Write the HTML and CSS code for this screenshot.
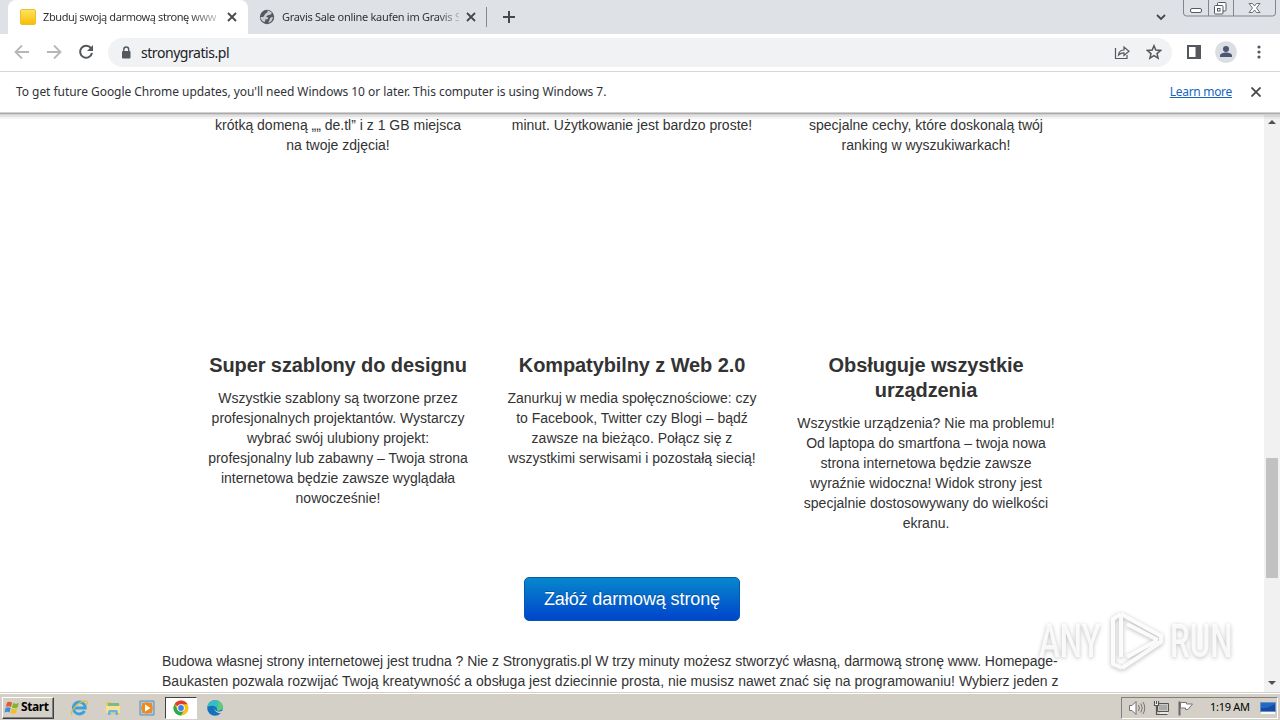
FILE: index.html
```
<!DOCTYPE html>
<html lang="pl">
<head>
  <meta charset="UTF-8" />
  <title>Zbuduj swoją darmową stronę www</title>
  <link rel="stylesheet" href="styles.css">
</head>
<body>
  <div id="screen">
    <div id="tabstrip">
      <div class="tab active">
        <span class="favicon-yellow"></span>
        <span class="tab-title">Zbuduj swoją darmową stronę www</span>
        <svg class="close" width="10" height="10" viewBox="0 0 10 10"><path d="M1 1l8 8M9 1l-8 8" /></svg>
      </div>
      <div class="tab">
        <svg class="globe" width="16" height="16" viewBox="0 0 16 16"><circle cx="8" cy="8" r="7.2" fill="#54585d" /><path d="M8.500 1.500q.5 2-1 2.500T5.500 6 4 8H1.500q0 3 3.500 5 2-.5 1-2.500 3 0 3-1.500T7 8q1-2 3-2t3-2q-2-2.500-4.500-2.500zM14 8q-2.500-.5-3 1.500t-2 4q4 0 5-5.500z" fill="#dee1e6" opacity=".85" /></svg>
        <span class="tab-title second">Gravis Sale online kaufen im Gravis S</span>
        <svg class="close" width="10" height="10" viewBox="0 0 10 10"><path d="M1 1l8 8M9 1l-8 8" /></svg>
      </div>
      <span class="separator"></span>
      <svg class="new-tab" width="12" height="12" viewBox="0 0 12 12"><path d="M6 0v12M0 6h12" /></svg>
      <svg class="tab-search" width="10" height="7" viewBox="0 0 10 7"><path d="M1 1l4 4 4-4" /></svg>
      <svg class="window-buttons" width="94" height="18" viewBox="0 0 94 18">
        <path d="M.5 0v13q0 3 3 3h86q3 0 3-3V0M25.500 0v16M50.500 0v16" fill="none" stroke="#81858d" />
        <rect x="7.500" y="8.500" width="11" height="4" rx="1.500" fill="#fff" stroke="#555a63" />
        <rect x="34.500" y="2.500" width="8.500" height="8.500" rx="1" fill="#fff" stroke="#555a63" />
        <rect x="31.500" y="5.500" width="8.500" height="8.500" rx="1" fill="#fff" stroke="#555a63" />
        <rect x="34.500" y="8.500" width="2.500" height="2.500" fill="none" stroke="#555a63" />
        <path d="M66 3.500h3.500l2 2.500 2-2.500H77l-3.500 4.500 3.500 4.500h-3.500l-2-2.500-2 2.500H66l3.500-4.500z" fill="#fff" stroke="#6b6f77" />
      </svg>
    </div>

    <div id="toolbar">
      <svg class="nav" width="16" height="16" viewBox="0 0 16 16"><path d="M15 8H2M8 1.500L1.500 8 8 14.500" stroke="#b5b7ba" /></svg>
      <svg class="nav" width="16" height="16" viewBox="0 0 16 16"><path d="M1 8h13M8 1.500L14.500 8 8 14.500" stroke="#b5b7ba" /></svg>
      <svg class="nav reload" width="16" height="16" viewBox="0 0 16 16"><path d="M13 4.200A6 6 0 1 0 14 9" stroke="#54585d" stroke-width="2" /><path d="M15 1v6H9z" fill="#54585d" stroke="none" /></svg>
      <div id="omnibox">
        <svg width="10" height="13" viewBox="0 0 10 13"><rect x="1" y="5" width="8.500" height="7.500" rx="1" fill="#54585d" /><path d="M2.800 5.500V3.500a2.450 2.450 0 0 1 4.900 0v2" fill="none" stroke="#54585d" stroke-width="1.400" /></svg>
        <span class="url">stronygratis.pl</span>
        <svg class="share" width="16" height="16" viewBox="0 0 16 16"><path d="M1.500 4v10.500H13V11M4.500 11C5 7.500 7 6 10 6V3l5 4.300L10 11.500V8.800C7.500 8.800 6 9.500 4.500 11z" fill="none" stroke="#54585d" stroke-width="1.200" /></svg>
        <svg class="star" width="16" height="16" viewBox="0 0 16 16"><path d="M8 1.800l1.800 4.300 4.700.4L11 9.600l1.100 4.600L8 11.700l-4.100 2.500L5 9.600 1.500 6.500l4.700-.4z" fill="none" stroke="#54585d" stroke-width="1.500" /></svg>
      </div>
      <svg class="panel" width="14" height="14" viewBox="0 0 14 14"><path d="M1 1h12v12H1z" fill="none" stroke="#54585d" stroke-width="2" /><path d="M8.500 1H13v12H8.500z" fill="#54585d" /></svg>
      <svg class="profile" width="22" height="22" viewBox="0 0 22 22"><circle cx="11" cy="11" r="10.800" fill="#dadde2" /><circle cx="11" cy="8" r="3" fill="#4b5672" /><path d="M5 16v-1.500c0-2 3.500-3 6-3s6 1 6 3V16z" fill="#4b5672" /></svg>
      <svg class="menu" width="4" height="14" viewBox="0 0 4 14"><g fill="#54585d"><circle cx="2" cy="2" r="1.600" /><circle cx="2" cy="7" r="1.600" /><circle cx="2" cy="12" r="1.600" /></g></svg>
    </div>

    <div id="infobar">
      <span class="message">To get future Google Chrome updates, you'll need Windows 10 or later. This computer is using Windows 7.</span>
      <a class="learn-more">Learn more</a>
      <svg class="close" width="10" height="10" viewBox="0 0 10 10"><path d="M.5.5l9 9M9.500.5l-9 9" /></svg>
    </div>

    <div id="viewport">
      <div id="page">
        <div class="features top">
          <div class="feature"><p>krótką domeną „„ de.tl” i z 1 GB miejsca<br>na twoje zdjęcia!</p></div>
          <div class="feature"><p>minut. Użytkowanie jest bardzo proste!</p></div>
          <div class="feature"><p>specjalne cechy, które doskonalą twój<br>ranking w wyszukiwarkach!</p></div>
        </div>
        <div class="features bottom">
          <div class="feature">
            <h3>Super szablony do designu</h3>
            <p>Wszystkie szablony są tworzone przez<br>profesjonalnych projektantów. Wystarczy<br>wybrać swój ulubiony projekt:<br>profesjonalny lub zabawny – Twoja strona<br>internetowa będzie zawsze wyglądała<br>nowocześnie!</p>
          </div>
          <div class="feature">
            <h3>Kompatybilny z Web 2.0</h3>
            <p>Zanurkuj w media społęcznościowe: czy<br>to Facebook, Twitter czy Blogi – bądź<br>zawsze na bieżąco. Połącz się z<br>wszystkimi serwisami i pozostałą siecią!</p>
          </div>
          <div class="feature">
            <h3>Obsługuje wszystkie<br>urządzenia</h3>
            <p>Wszystkie urządzenia? Nie ma problemu!<br>Od laptopa do smartfona – twoja nowa<br>strona internetowa będzie zawsze<br>wyraźnie widoczna! Widok strony jest<br>specjalnie dostosowywany do wielkości<br>ekranu.</p>
          </div>
        </div>
        <a class="btn">Załóż darmową stronę</a>
        <p class="intro"><span class="tight">Budowa własnej strony internetowej jest trudna ? Nie z Stronygratis.pl W trzy minuty możesz stworzyć własną, darmową stronę www. Homepage-</span><br>Baukasten pozwala rozwijać Twoją kreatywność a obsługa jest dziecinnie prosta, nie musisz nawet znać się na programowaniu! Wybierz jeden z</p>
      </div>
      <div id="scrollbar">
        <svg width="8" height="4" viewBox="0 0 8 4"><path d="M0 4l4-4 4 4z" fill="#505050" /></svg>
        <span class="thumb"></span>
        <svg width="8" height="4" viewBox="0 0 8 4"><path d="M0 0l4 4 4-4z" fill="#505050" /></svg>
      </div>
    </div>

    <div id="taskbar">
      <div class="start">
        <svg width="16" height="16" viewBox="0 0 16 16"><path d="M3 2.500q2-1.500 5 0L7 7Q4.500 5.500 1.800 7z" fill="#e8582a" /><path d="M9 3q3 1.500 6 0l-1.500 4.500q-3 1.300-5.500 0z" fill="#7db72f" /><path d="M1.500 8q2.500-1.500 5.200 0l-1.200 4.500q-2.500-1.500-5 0z" fill="#3f8edb" /><path d="M7.700 8.500q2.500 1.300 5.500 0L12 13q-3 1.500-5.500 0z" fill="#f6bd22" /></svg>
        <span>Start</span>
      </div>
      <div class="quick">
        <svg width="18" height="18" viewBox="0 0 18 18"><path d="M14.500 12a6 6 0 1 1 .8-3H5" fill="none" stroke="#39a2de" stroke-width="2.800" /><path d="M2 16C-1 12 11 1 16 2c2 .6 1 3 0 4" fill="none" stroke="#e9b93c" stroke-width="1.300" /></svg>
      </div>
      <div class="quick">
        <svg width="18" height="18" viewBox="0 0 18 18"><path d="M2 3h5l1 2h8v10H2z" fill="#e9c766" /><path d="M4 4h11v5H4z" fill="#7dbb82" /><path d="M2 7h14v7H2z" fill="#f6e19a" /><path d="M4 16v-3q0-2 2-2h6q2 0 2 2v3h-2.500v-2.500h-5V16z" fill="#67b5df" /></svg>
      </div>
      <div class="quick">
        <svg width="18" height="18" viewBox="0 0 18 18"><path d="M2 2h14v14H2z" fill="#a9cbe4" stroke="#5b8fb8" /><path d="M4 4h9v10H4z" fill="#d8e7f0" /><path d="M4 4h10v10H4z" fill="#f08a1c" /><circle cx="9" cy="9" r="5.800" fill="#f08a1c" /><path d="M7 5.500L12.500 9 7 12.500z" fill="#fff" /></svg>
      </div>
      <div class="quick pressed">
        <svg width="16" height="16" viewBox="0 0 16 16"><circle cx="8" cy="8" r="7.500" fill="#fbc116" /><path d="M8 8L1.500 4.250A7.500 7.500 0 0 1 14.500 4.250H8z" fill="#e33b2e" /><path d="M1.500 4.250A7.500 7.500 0 0 0 8 15.500L11.200 10 4.800 10z" fill="#2da94f" /><circle cx="8" cy="8" r="3.800" fill="#fff" /><circle cx="8" cy="8" r="2.900" fill="#3f7fe8" /></svg>
      </div>
      <div class="quick">
        <svg width="18" height="18" viewBox="0 0 18 18"><circle cx="9" cy="9" r="7.800" fill="#1472bd" /><path d="M1.300 8C2 3.500 5.500 1.200 9 1.200c5 0 8 3.500 7.800 7.300-.2 2.500-3 3.700-5.800 2.700 1-4-5-6-9.700-3.200z" fill="#37bfc0" /><path d="M12 1.800c3 1.200 5 4 4.700 7-.4 2-3 3.200-5.700 2.400 1.500-3 2-6 1-9.400z" fill="#5fce72" /><path d="M8.500 8c-.5 3.500 2.500 5 6.500 4.300l1.500-.5 1.500 1-3 1.500C11.500 14.500 7.500 12 8.500 8z" fill="#d4d0c8" /></svg>
      </div>
      <div class="tray">
        <svg width="18" height="16" viewBox="0 0 18 16"><path d="M1.500 5.500H4L8 1.500v13L4 10.500H1.500z" fill="#fff" stroke="#6e6e6e" /><path d="M10.500 5q1.800 3 0 6M12.800 3.500q3 4.500 0 9M15 2q3.500 6 0 12" fill="none" stroke="#777" /></svg>
        <svg width="18" height="16" viewBox="0 0 18 16"><path d="M4.500 3.500h11v8h-11z" fill="#c8c8c8" stroke="#555" /><path d="M6 5h8v5H6z" fill="#aaa" /><path d="M1 1h5v5H1z" fill="#fff" /><path d="M1.500 1v4.500h4V1M3.500 1v3M3.500 5.500v9h11" fill="none" stroke="#555" stroke-width="1.200" /><path d="M7 13h8" stroke="#fff" /></svg>
        <svg width="17" height="16" viewBox="0 0 17 16"><path d="M1.500 1.500v14" stroke="#666" stroke-width="2" /><path d="M2.500 2.500h6V4h6l-2.500 3-2 2.500H7.500V8h-5z" fill="#fff" stroke="#777" /></svg>
        <span class="clock">1:19 AM</span>
        <svg class="desktop" width="16" height="14" viewBox="0 0 16 14"><path d="M.5 1.500h15v9H.5z" fill="#2468c5" stroke="#6890c2" /><path d="M1 7Q8 8 15 3v7H1z" fill="#164b9f" /><path d="M1 12h14" stroke="#f8f8f8" stroke-width="2" /></svg>
      </div>
    </div>

    <div id="watermark">
      <span>ANY</span>
      <svg width="60" height="64" viewBox="0 0 60 64"><path d="M15 5v43M15 5L55 27v6L16 59M15 5L7 10v45l9 4M21 48l31-17M21 15l31 16" /></svg>
      <span>RUN</span>
    </div>
  </div>
</body>
</html>
```
FILE: styles.css
```
:root {
  --strip: #dee1e6;
  --icon: #45484d;
  --text: #333;
  --taskbar: #d4d0c8;
}

* {
  margin: 0;
  padding: 0;
  box-sizing: border-box;
}

body {
  background: #fff;
  overflow: hidden;
}

svg {
  display: block;
  flex: none;
}

#screen {
  position: relative;
  width: 1280px;
  height: 720px;
  display: flex;
  flex-direction: column;
  font-family: "Noto Sans", sans-serif;
  color: #303338;
}

#tabstrip {
  height: 34px;
  flex: none;
  display: flex;
  align-items: center;
  padding-left: 8px;
  background: var(--strip);
}

.tab {
  width: 239px;
  height: 34px;
  display: flex;
  align-items: center;
  padding: 0 0 0 11px;
}

.tab.active {
  width: 240px;
  padding-left: 12px;
  background: #fff;
  border-radius: 8px 8px 0 0;
}

.favicon-yellow {
  width: 16px;
  height: 16px;
  border: 1px solid #edbd32;
  border-radius: 2px;
  background: linear-gradient(#ffe35c, #fabd08);
}

.tab-title {
  width: 175px;
  margin-left: 7px;
  margin-right: 9px;
  padding-bottom: 1px;
  overflow: hidden;
  white-space: nowrap;
  font-size: 11px;
  letter-spacing: -0.4px;
  -webkit-mask-image: linear-gradient(to right, #000 145px, transparent 185px);
}

.tab-title.second {
  width: 177px;
  margin-right: 7px;
  letter-spacing: -0.3px;
  -webkit-mask-image: linear-gradient(to right, #000 155px, transparent 183px);
}

.close {
  fill: none;
  stroke: var(--icon);
  stroke-width: 1.8;
}

.separator {
  width: 1px;
  height: 20px;
  margin-left: -1px;
  background: #85888d;
}

.new-tab {
  margin-left: 16px;
  stroke: var(--icon);
  stroke-width: 2;
}

.tab-search {
  margin-left: auto;
  fill: none;
  stroke: var(--icon);
  stroke-width: 1.8;
}

.window-buttons {
  align-self: flex-start;
  margin: 0 3px 0 17px;
}

#toolbar {
  height: 38px;
  flex: none;
  display: flex;
  align-items: center;
  padding-left: 14px;
  padding-bottom: 1px;
  border-bottom: 1px solid #d5d7da;
}

.nav {
  margin-right: 16px;
  fill: none;
  stroke-width: 1.8;
}

.nav.reload {
  margin-right: 14px;
}

#omnibox {
  width: 1064px;
  height: 29px;
  display: flex;
  align-items: center;
  padding: 0 10px 0 13px;
  border-radius: 15px;
  background: #f0f2f4;
}

.url {
  margin-left: 10px;
  font-size: 14px;
  letter-spacing: -0.45px;
  color: #202124;
}

.share {
  margin-left: auto;
  margin-right: 16px;
}

.panel {
  margin-left: 15px;
}

.profile {
  margin-left: 14px;
}

.menu {
  margin-left: 20px;
}

#infobar {
  height: 43px;
  flex: none;
  display: flex;
  align-items: center;
  padding: 0 19px 3px 16px;
  background: linear-gradient(#fff 40px, #d0d0d0 40px 41px, #ababab 41px 42px, #cfcfcf 42px);
  font-size: 12px;
}

#infobar .close {
  margin-left: 19px;
}

.message {
  padding-bottom: 1px;
  white-space: nowrap;
  letter-spacing: -0.05px;
}

.learn-more {
  margin-left: auto;
  padding-bottom: 1px;
  letter-spacing: -0.3px;
  color: #1765c1;
  text-decoration: underline;
}

#viewport {
  height: 577px;
  flex: none;
  display: flex;
  overflow: hidden;
  background: linear-gradient(#e2e2e2 2px, #f5f5f5 2px 4px, #fff 4px);
}

#page {
  width: 1264px;
  display: flex;
  flex-direction: column;
  align-items: center;
  font-family: "Liberation Sans", Arial, sans-serif;
  font-size: 14px;
  line-height: 20px;
  color: var(--text);
}

.features {
  display: flex;
  gap: 20px;
  flex: none;
  text-align: center;
  white-space: nowrap;
}

.features.top {
  height: 238px;
}

.features.bottom {
  height: 224px;
}

.feature {
  width: 274px;
}

.feature h3 {
  margin-bottom: 10px;
  font-size: 20px;
  line-height: 25px;
  letter-spacing: -0.1px;
}

.btn {
  width: 216px;
  height: 44px;
  flex: none;
  border: 1px solid #0759b0;
  border-radius: 5px;
  background: linear-gradient(#0788cc, #0044cc);
  color: #fff;
  font-size: 18px;
  line-height: 42px;
  letter-spacing: -0.1px;
  text-align: center;
  text-shadow: 0 -1px 0 rgba(0, 0, 0, 0.25);
}

.intro {
  width: 940px;
  flex: none;
  margin-top: 30px;
  white-space: nowrap;
  letter-spacing: 0.015px;
}

.intro .tight {
  letter-spacing: -0.045px;
}

#scrollbar {
  width: 16px;
  display: flex;
  flex-direction: column;
  align-items: center;
  padding: 5px 0 7px;
  background: linear-gradient(#d5d5d5 2px, #e8e8e8 2px 4px, #f1f1f1 4px);
}

.thumb {
  width: 12px;
  height: 120px;
  margin-top: 334px;
  margin-bottom: auto;
  background: #c1c1c1;
}

#taskbar {
  height: 28px;
  flex: none;
  display: flex;
  align-items: center;
  padding: 2px 2px 0;
  border-top: 1px solid #d4d0c8;
  background: var(--taskbar);
  box-shadow: inset 0 1px #fff;
}

.start {
  width: 52px;
  height: 22px;
  display: flex;
  align-items: center;
  gap: 1px;
  padding-left: 1px;
  border: 1px solid;
  border-color: #fff #404040 #404040 #fff;
  box-shadow: inset -1px -1px #808080;
  font-size: 12px;
  font-weight: bold;
  letter-spacing: -0.4px;
  color: #000;
}

.start span {
  padding-bottom: 2px;
}

.quick {
  width: 32px;
  height: 22px;
  margin-right: 2px;
  display: flex;
  align-items: center;
  justify-content: center;
}

.start + .quick {
  margin-left: 9px;
}

.quick.pressed {
  border: 1px solid;
  border-color: #404040 #fff #fff #404040;
  background: #fff;
}

.tray {
  width: 157px;
  height: 22px;
  margin-left: auto;
  display: flex;
  align-items: center;
  gap: 7px;
  padding-left: 6px;
  border: 1px solid;
  border-color: #808080 #fff #fff #808080;
}

.clock {
  margin-left: 8px;
  padding-bottom: 2px;
  white-space: nowrap;
  font-size: 11px;
  letter-spacing: -0.3px;
  color: #000;
}

.desktop {
  margin-left: 3px;
}

/* translucent logo lying over the page */
#watermark {
  position: absolute;
  left: 1039px;
  top: 608px;
  display: flex;
  align-items: center;
  gap: 4px;
  font-family: Roboto, sans-serif;
  font-size: 46px;
  font-weight: 500;
  color: rgba(255, 255, 255, 0.85);
  filter: drop-shadow(0 1px 2px rgba(0, 0, 0, 0.3));
}

#watermark span {
  width: 63px;
  line-height: 66px;
  white-space: nowrap;
  transform: scaleX(0.68);
  transform-origin: left;
}

#watermark path {
  fill: none;
  stroke: rgba(255, 255, 255, 0.9);
  stroke-width: 4;
  stroke-linejoin: round;
}
```
